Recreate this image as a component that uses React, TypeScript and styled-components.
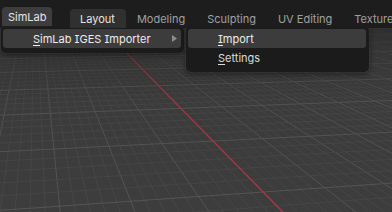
import styled, { createGlobalStyle } from 'styled-components';

const GlobalStyle = createGlobalStyle`
  html, body {
    margin: 0;
    padding: 0;
    background: #3d3d3d;
  }
`

const Screen = styled.div`
  position: relative;
  width: 392px;
  height: 212px;
  overflow: hidden;
  display: flex;
  flex-direction: column;
  background: #3d3d3d;
  font-family: Inter, "Noto Sans", "DejaVu Sans", sans-serif;
  font-feature-settings: "cv08" 1;
  font-size: 11px;
`

const TopBar = styled.div`
  height: 28px;
  flex: none;
  display: flex;
  align-items: flex-end;
  padding-left: 2px;
  overflow: hidden;
  background: #1d1d1d;
`

const MenuButton = styled.div`
  flex: none;
  width: 50px;
  height: 19px;
  margin-bottom: 2px;
  box-sizing: border-box;
  padding-left: 6px;
  display: flex;
  align-items: center;
  border-radius: 4px 4px 0 0;
  background: #3d3d3d;
  color: #e6e6e6;
`

const Tabs = styled.div`
  flex: none;
  display: flex;
  gap: 1px;
  margin-left: 18px;
`

const Tab = styled.div<{ $active?: boolean }>`
  flex: none;
  height: 19px;
  padding: 0 11px 0 10px;
  display: flex;
  align-items: center;
  white-space: nowrap;
  border-radius: 4px 4px 0 0;
  background: ${(p) => (p.$active ? '#303030' : 'transparent')};
  color: ${(p) => (p.$active ? '#e6e6e6' : '#a0a0a0')};
`

const Viewport = styled.div`
  position: relative;
  flex: 1;
  overflow: hidden;
`

const MenuLayer = styled.div`
  position: absolute;
  top: -2px;
  left: 1px;
  display: flex;
  gap: 2px;
  align-items: flex-start;
`

const Menu = styled.div`
  width: 183px;
  box-sizing: border-box;
  padding: 3px 3px 5px 2px;
  display: flex;
  flex-direction: column;
  border-radius: 5px;
  background: #1b1b1b;
  box-shadow: 0 0 0 1px rgba(255, 255, 255, 0.04), 0 2px 6px rgba(0, 0, 0, 0.45);
`

const Item = styled.div<{ $hot?: boolean }>`
  height: 19px;
  padding-left: 30px;
  display: flex;
  align-items: center;
  border-radius: 3px;
  background: ${(p) => (p.$hot ? '#3c3c3c' : 'transparent')};
  color: ${(p) => (p.$hot ? '#ececec' : '#dcdcdc')};
  white-space: nowrap;

  u {
    text-decoration-thickness: 1px;
    text-underline-offset: 2px;
  }
`

const Arrow = styled.svg`
  margin-left: auto;
  margin-right: 4px;
`

// perspective floor grid, a homography built from two vanishing points
const G = { ax: 35, ay: -40, bx: 3000, by: 2, ox: 213, oy: 141, l1: 0.044, l2: 0.0036 }

function proj(u: number, v: number) {
  const w = 1 + G.l1 * u + G.l2 * v
  return [(G.l1 * G.ax * u + G.l2 * G.bx * v + G.ox) / w, (G.l1 * G.ay * u + G.l2 * G.by * v + G.oy) / w]
}

type Seg = { d: string; major: boolean }

function gridLines() {
  const out: Seg[] = []
  for (let c = -200; c <= 200; c++) {
    if (c === 0) continue
    const u0 = (0.08 - 1 - G.l2 * c) / G.l1
    const p = proj(u0, c)
    const q = proj(4000, c)
    out.push({ d: `M${p[0].toFixed(1)} ${p[1].toFixed(1)}L${q[0].toFixed(1)} ${q[1].toFixed(1)}`, major: c % 5 === 0 })
  }
  for (let c = -20; c <= 120; c++) {
    const v0 = (0.08 - 1 - G.l1 * c) / G.l2
    const p = proj(c, Math.max(v0, -3000))
    const q = proj(c, 6000)
    out.push({ d: `M${p[0].toFixed(1)} ${p[1].toFixed(1)}L${q[0].toFixed(1)} ${q[1].toFixed(1)}`, major: c % 5 === 0 })
  }
  return out
}

const lines = gridLines()
const red0 = proj(-19, 0)
const red1 = proj(4000, 0)

function FloorGrid() {
  return (
    <svg width="392" height="184" viewBox="0 28 392 184" style={{ display: 'block' }}>
      <defs>
        <linearGradient id="fade" x1="0" y1="28" x2="0" y2="212" gradientUnits="userSpaceOnUse">
          <stop offset="0" stopColor="#262626" stopOpacity="0.75" />
          <stop offset="0.14" stopColor="#262626" stopOpacity="0.45" />
          <stop offset="0.4" stopColor="#262626" stopOpacity="0.08" />
          <stop offset="1" stopColor="#262626" stopOpacity="0" />
        </linearGradient>
      </defs>
      <rect x="0" y="28" width="392" height="184" fill="#3d3d3d" />
      {lines.map((l, i) => (
        <path key={i} d={l.d} stroke={l.major ? '#555555' : '#494949'} strokeWidth={l.major ? 1 : 0.8} fill="none" />
      ))}
      <path d={`M${red0[0]} ${red0[1]}L${red1[0]} ${red1[1]}`} stroke="#a33a4a" strokeWidth="1.4" fill="none" />
      <rect x="0" y="28" width="392" height="184" fill="url(#fade)" />
    </svg>
  )
}

export default function App() {
  return (
    <Screen>
      <GlobalStyle />
      <TopBar>
        <MenuButton>SimLab</MenuButton>
        <Tabs>
          <Tab $active>Layout</Tab>
          <Tab>Modeling</Tab>
          <Tab>Sculpting</Tab>
          <Tab>UV Editing</Tab>
          <Tab>Texture Paint</Tab>
        </Tabs>
      </TopBar>
      <Viewport>
        <FloorGrid />
        <MenuLayer>
          <Menu>
            <Item $hot>
              <span><u>S</u>imLab IGES Importer</span>
              <Arrow width="5" height="7" viewBox="0 0 5 7">
                <polygon points="0,0 5,3.5 0,7" fill="#8c8c8c" />
              </Arrow>
            </Item>
          </Menu>
          <Menu>
            <Item $hot>
              <span><u>I</u>mport</span>
            </Item>
            <Item>
              <span><u>S</u>ettings</span>
            </Item>
          </Menu>
        </MenuLayer>
      </Viewport>
    </Screen>
  )
}
